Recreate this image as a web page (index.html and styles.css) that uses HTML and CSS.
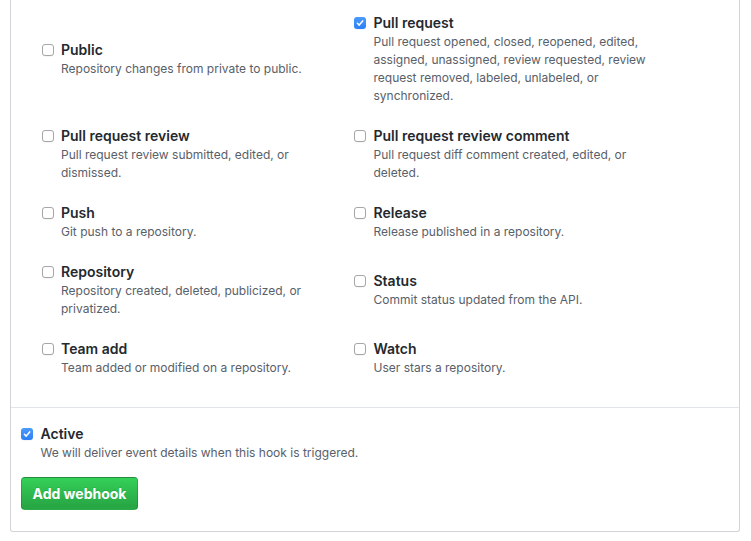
FILE: index.html
```html
<!DOCTYPE html>
<html lang="en">
<head>
<meta charset="utf-8">
<title>Webhook events</title>
<link rel="stylesheet" href="styles.css">
</head>
<body>
<div class="box">
  <div class="events">
    <div class="event">
      <span class="cb"></span>
      <div class="body"><div class="title">Public</div><p class="note">Repository changes from private to public.</p></div>
    </div>
    <div class="event">
      <span class="cb on"><svg viewBox="0 0 12 12" width="12" height="12"><path d="M3.4 6.3 L5.2 8.1 L8.7 3.9" fill="none" stroke="#fff" stroke-width="1.5" stroke-linecap="round" stroke-linejoin="round"/></svg></span>
      <div class="body"><div class="title">Pull request</div><p class="note">Pull request opened, closed, reopened, edited,<br>assigned, unassigned, review requested, review<br>request removed, labeled, unlabeled, or<br>synchronized.</p></div>
    </div>
    <div class="event">
      <span class="cb"></span>
      <div class="body"><div class="title">Pull request review</div><p class="note">Pull request review submitted, edited, or<br>dismissed.</p></div>
    </div>
    <div class="event">
      <span class="cb"></span>
      <div class="body"><div class="title">Pull request review comment</div><p class="note">Pull request diff comment created, edited, or<br>deleted.</p></div>
    </div>
    <div class="event">
      <span class="cb"></span>
      <div class="body"><div class="title">Push</div><p class="note">Git push to a repository.</p></div>
    </div>
    <div class="event">
      <span class="cb"></span>
      <div class="body"><div class="title">Release</div><p class="note">Release published in a repository.</p></div>
    </div>
    <div class="event">
      <span class="cb"></span>
      <div class="body"><div class="title">Repository</div><p class="note">Repository created, deleted, publicized, or<br>privatized.</p></div>
    </div>
    <div class="event">
      <span class="cb"></span>
      <div class="body"><div class="title">Status</div><p class="note">Commit status updated from the API.</p></div>
    </div>
    <div class="event">
      <span class="cb"></span>
      <div class="body"><div class="title">Team add</div><p class="note">Team added or modified on a repository.</p></div>
    </div>
    <div class="event">
      <span class="cb"></span>
      <div class="body"><div class="title">Watch</div><p class="note">User stars a repository.</p></div>
    </div>
  </div>
  <div class="footer">
    <div class="event">
      <span class="cb on"><svg viewBox="0 0 12 12" width="12" height="12"><path d="M3.4 6.3 L5.2 8.1 L8.7 3.9" fill="none" stroke="#fff" stroke-width="1.5" stroke-linecap="round" stroke-linejoin="round"/></svg></span>
      <div class="body"><div class="title">Active</div><p class="note">We will deliver event details when this hook is triggered.</p></div>
    </div>
    <button class="btn" type="button">Add webhook</button>
  </div>
</div>
</body>
</html>
```
FILE: styles.css
```css
html, body {
  margin: 0;
  padding: 0;
  background: #fff;
}
body {
  font-family: Inter, "Liberation Sans", Arial, sans-serif;
  color: #24292e;
}
.box {
  margin-left: 10px;
  width: 728px;
  border: 1px solid #d1d5da;
  border-top: 0;
  border-radius: 0 0 3px 3px;
}
.events {
  display: grid;
  grid-template-columns: 312.5px 312.5px;
  row-gap: 20px;
  align-items: center;
  padding: 11.5px 0 30.5px 30.5px;
}
.event {
  display: flex;
  align-items: flex-start;
  gap: 7.5px;
}
.cb {
  flex: none;
  box-sizing: border-box;
  width: 12px;
  height: 12px;
  margin-top: 5.5px;
  border: 1px solid #a6a6a6;
  border-radius: 3px;
  background: #fff;
  box-shadow: 0 0.5px 0.5px rgba(0, 0, 0, 0.08);
  display: flex;
  align-items: center;
  justify-content: center;
}
.cb.on {
  border: 0;
  background: linear-gradient(#4a9bfb, #2c7ff5);
}
.cb svg {
  display: block;
}
.title {
  font-size: 14px;
  font-weight: 600;
  line-height: 21px;
  color: #24292e;
}
.note {
  margin: 0;
  font-size: 12px;
  line-height: 18px;
  color: #586069;
}
.footer {
  border-top: 1px solid #e1e4e8;
  padding: 14.5px 10px 21px;
}
.btn {
  display: block;
  margin-top: 15.5px;
  padding: 6px 10.5px;
  font-family: inherit;
  font-size: 14px;
  font-weight: 700;
  line-height: 19px;
  color: #fff;
  background: linear-gradient(180deg, #34d058 0%, #28a745 90%);
  border: 1px solid rgba(27, 31, 35, 0.2);
  border-radius: 4px;
  text-shadow: 0 -1px 0 rgba(0, 0, 0, 0.1);
}
```
